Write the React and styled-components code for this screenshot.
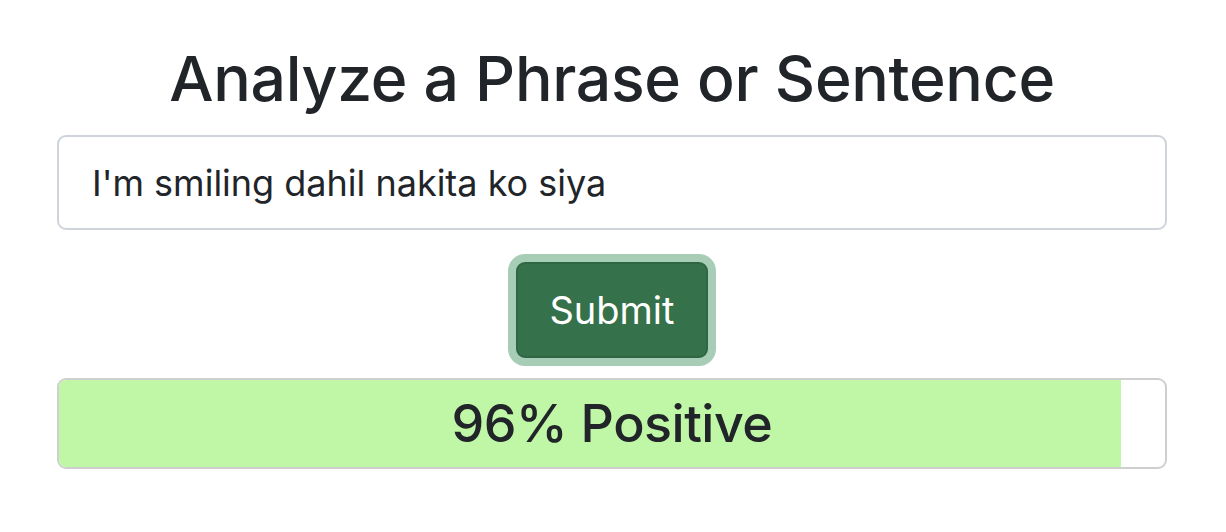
import React from "react"
import styled, { createGlobalStyle } from "styled-components"

const GlobalStyle = createGlobalStyle`
  body {
    margin: 0;
    background: #fff;
    font-family: Inter, "Noto Sans", sans-serif;
    color: #212529;
  }
`

const Page = styled.div`
  width: 1110px;
  margin-left: 57px;
  padding-top: 41px;
  display: flex;
  flex-direction: column;
  align-items: center;
`

const Title = styled.h1`
  margin: 0 0 19px;
  font-size: 62.5px;
  font-weight: 500;
  line-height: 1.2;
  letter-spacing: -0.3px;
`

const Input = styled.input`
  box-sizing: border-box;
  width: 100%;
  height: 95px;
  padding: 0 33px;
  font-family: inherit;
  font-size: 36px;
  color: #212529;
  border: 2px solid #ced4da;
  border-radius: 9px;
  outline: none;
  margin-bottom: 32px;
`

const Button = styled.button`
  box-sizing: border-box;
  width: 192px;
  height: 96px;
  padding: 0;
  font-family: inherit;
  font-size: 38px;
  color: #fff;
  background: #35714a;
  border: 2px solid #2f6643;
  border-radius: 9px;
  box-shadow: 0 0 0 8px #a8cdb6;
  margin-bottom: 20px;
  cursor: pointer;
`

const Bar = styled.div`
  box-sizing: border-box;
  position: relative;
  width: 100%;
  height: 91px;
  border: 2px solid #cfcfcf;
  border-radius: 9px;
  overflow: hidden;
  display: flex;
`

const Fill = styled.div`
  background: ${({ $color }) => $color};
  height: 100%;
`

const Label = styled.div`
  position: absolute;
  inset: 0;
  display: flex;
  align-items: center;
  justify-content: center;
  font-size: 52px;
  font-weight: 500;
  letter-spacing: -0.5px;
  color: #212529;
`

export default function App() {
  const score = 96
  return (
    <>
      <GlobalStyle />
      <Page>
        <Title>Analyze a Phrase or Sentence</Title>
        <Input defaultValue="I'm smiling dahil nakita ko siya" />
        <Button>Submit</Button>
        <Bar>
          <Fill $color="#c0f7a6" style={{ width: `${score}%` }} />
          <Label>{score}% Positive</Label>
        </Bar>
      </Page>
    </>
  )
}
